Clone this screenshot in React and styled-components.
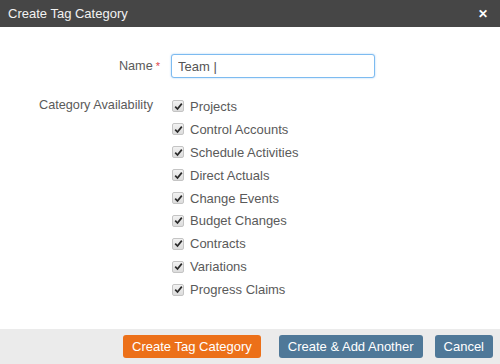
import styled, { createGlobalStyle } from "styled-components";

const GlobalStyle = createGlobalStyle`
  body {
    margin: 0;
    font-family: "Liberation Sans", Arial, sans-serif;
    background: #fff;
  }
`;

const Dialog = styled.div`
  width: 500px;
  height: 364px;
  display: flex;
  flex-direction: column;
  background: #fff;
  overflow: hidden;
`;

const Header = styled.div`
  height: 27px;
  flex: none;
  display: flex;
  align-items: center;
  justify-content: space-between;
  padding: 0 12px 0 8px;
  background: #464646;
  color: #f2f2f2;
  font-size: 13px;
`;

const Close = styled.span`
  font-size: 12px;
  font-weight: 700;
  color: #fff;
  line-height: 1;
  cursor: pointer;
`;

const Body = styled.div`
  flex: 1;
  padding-top: 27px;
`;

const Form = styled.div`
  display: grid;
  grid-template-columns: 153px 210px;
  column-gap: 18px;
  row-gap: 17px;
  align-items: start;
`;

const Label = styled.div`
  display: flex;
  justify-content: flex-end;
  align-items: center;
  height: ${(p) => p.height || 24}px;
  font-size: 12.7px;
  color: #5a5a5a;
  white-space: nowrap;
`;

const Required = styled.span`
  color: #e0474c;
  font-size: 11px;
  margin-left: 3px;
  margin-right: -7px;
`;

const Input = styled.input`
  box-sizing: border-box;
  width: 204px;
  height: 24px;
  margin: 0;
  padding: 0 6px;
  border: 1px solid #7dbbf0;
  border-radius: 3px;
  box-shadow: 0 0 2px rgba(100, 170, 240, 0.6);
  font-family: inherit;
  font-size: 13px;
  color: #555;
  outline: none;
`;

const Checklist = styled.div`
  display: flex;
  flex-direction: column;
`;

const CheckRow = styled.label`
  display: flex;
  align-items: center;
  gap: 6px;
  height: 22.9px;
  font-size: 13px;
  color: #5a5a5a;
`;

const Box = styled.span`
  box-sizing: border-box;
  width: 12px;
  height: 12px;
  margin-left: 1px;
  border: 1px solid #c4c4c4;
  border-radius: 2px;
  background: linear-gradient(#f2f2f2, #dcdcdc);
  display: flex;
  align-items: center;
  justify-content: center;
`;

const Footer = styled.div`
  height: 34px;
  flex: none;
  display: flex;
  align-items: center;
  justify-content: flex-end;
  gap: 12px;
  padding: 0 7px 1px 0;
  background: #ebebeb;
`;

const Button = styled.button`
  height: 23px;
  padding: 0 9px;
  border: none;
  border-radius: 3px;
  background: ${(p) => (p.primary ? "#ec7019" : "#4f7898")};
  color: #fff;
  font-family: inherit;
  font-size: 13px;
  margin-right: ${(p) => (p.primary ? 6 : 0)}px;
  cursor: pointer;
`;

const items = [
  "Projects",
  "Control Accounts",
  "Schedule Activities",
  "Direct Actuals",
  "Change Events",
  "Budget Changes",
  "Contracts",
  "Variations",
  "Progress Claims",
];

const Check = () => (
  <Box>
    <svg width="9" height="9" viewBox="0 0 9 9">
      <path d="M1.2 4.6 L3.5 7 L7.8 1.6" fill="none" stroke="#2a2a2a" strokeWidth="1.7" />
    </svg>
  </Box>
);

export default function App() {
  return (
    <>
      <GlobalStyle />
      <Dialog>
        <Header>
          <span>Create Tag Category</span>
          <Close>✕</Close>
        </Header>
        <Body>
          <Form>
            <Label>
              Name<Required>*</Required>
            </Label>
            <Input defaultValue="Team |" />
            <Label height={20}>Category Availability</Label>
            <Checklist>
              {items.map((item) => (
                <CheckRow key={item}>
                  <Check />
                  {item}
                </CheckRow>
              ))}
            </Checklist>
          </Form>
        </Body>
        <Footer>
          <Button primary>Create Tag Category</Button>
          <Button>Create &amp; Add Another</Button>
          <Button>Cancel</Button>
        </Footer>
      </Dialog>
    </>
  );
}
